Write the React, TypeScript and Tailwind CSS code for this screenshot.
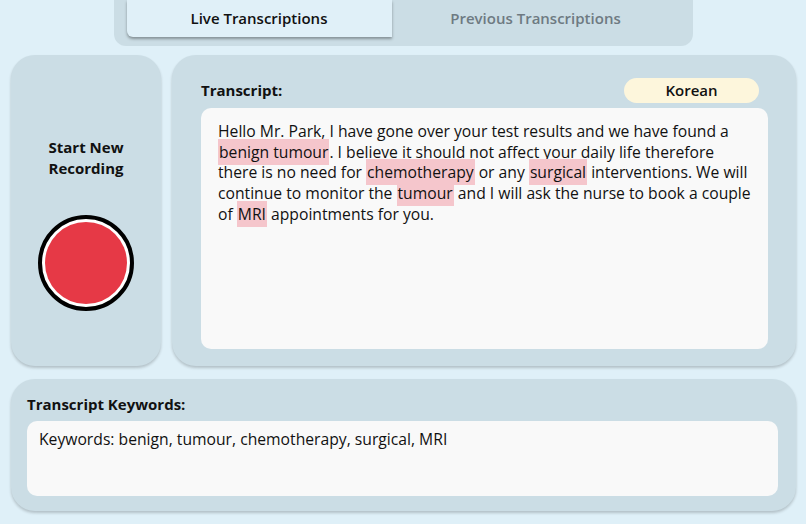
import React from "react";

const Hl = ({ children }: { children: React.ReactNode }) => (
  <span className="bg-[#f5c6cc] px-px py-[2px]">{children}</span>
);

export default function App() {
  return (
    <div className="bg-[#dff0f8] w-[806px] h-[524px] overflow-hidden font-['Open_Sans',sans-serif] text-[#111]">
      <div className="flex justify-center">
        <div className="flex bg-[#cbdde5] px-[13px] pb-[9px] rounded-b-xl w-[579px]">
          <div className="flex justify-center items-center bg-[#e0f0f8] shadow-[0_2px_3px_rgba(0,0,0,0.35)] rounded-bl-md w-[265px] h-[37px] font-semibold text-[15px]">
            Live Transcriptions
          </div>
          <div className="flex flex-1 justify-center items-center h-[37px] font-semibold text-[#6e7a82] text-[15px]">
            Previous Transcriptions
          </div>
        </div>
      </div>

      <div className="flex gap-[11px] mt-[9px] pr-[10px] pl-[11px]">
        <div className="flex flex-col items-center bg-[#cbdde5] shadow-[0_2px_3px_rgba(0,0,0,0.2)] rounded-[24px] w-[150px] h-[311px]">
          <div className="mt-[82px] font-bold text-[15px] text-center leading-[21px]">
            Start New
            <br />
            Recording
          </div>
          <button className="flex justify-center items-center bg-white mt-[36px] border-[4px] border-black rounded-full w-[96px] h-[96px]">
            <span className="block bg-[#e63946] rounded-full w-[82px] h-[82px]" />
          </button>
        </div>

        <div className="flex flex-col flex-1 bg-[#cbdde5] shadow-[0_2px_3px_rgba(0,0,0,0.2)] px-[29px] pt-[23px] pb-[17px] rounded-[24px] h-[311px]">
          <div className="flex justify-between items-center pr-[8px] h-[25px]">
            <div className="font-bold text-[15px]">Transcript:</div>
            <div className="flex justify-center items-center bg-[#fdf6dc] rounded-full w-[135px] h-[25px] font-semibold text-[15px]">
              Korean
            </div>
          </div>
          <div className="flex-1 bg-[#f9f9f9] mt-[5px] -mr-[1px] px-[17px] py-[13px] rounded-[10px] text-[15.7px] leading-[20.7px]">
            Hello Mr. Park, I have gone over your test results and we have found a <Hl>benign tumour</Hl>. I believe it
            should not affect your daily life therefore there is no need for <Hl>chemotherapy</Hl> or any{" "}
            <Hl>surgical</Hl> interventions. We will continue to monitor the <Hl>tumour</Hl> and I will ask the nurse to
            book a couple of <Hl>MRI</Hl> appointments for you.
          </div>
        </div>
      </div>

      <div className="flex flex-col bg-[#cbdde5] shadow-[0_2px_3px_rgba(0,0,0,0.2)] mt-[13px] mr-[10px] ml-[11px] px-[16px] pt-[15px] pb-[15px] rounded-[24px] h-[132px]">
        <div className="font-bold text-[15px] leading-[20px]">Transcript Keywords:</div>
        <div className="flex-1 bg-[#f9f9f9] mt-[7px] mr-[2px] px-[12px] py-[8px] rounded-[10px] text-[15.7px] leading-[21px]">
          Keywords: benign, tumour, chemotherapy, surgical, MRI
        </div>
      </div>
    </div>
  );
}
